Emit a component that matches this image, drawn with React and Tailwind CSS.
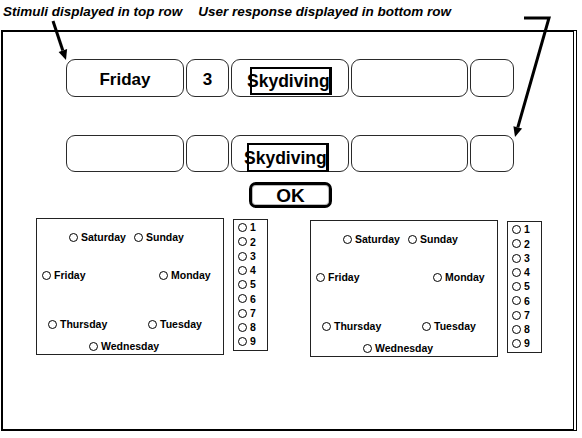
import React from 'react';

const days = [
    { row: 'pt-[12px] pl-[32px]', first: 'Saturday', firstW: 'w-[65px]', second: 'Sunday' },
    { row: 'pt-[26px] pl-[5px]', first: 'Friday', firstW: 'w-[117px]', second: 'Monday' },
    { row: 'pt-[37px] pl-[11px]', first: 'Thursday', firstW: 'w-[100px]', second: 'Tuesday' },
    { row: 'pt-[10px] pl-[52px]', first: 'Wednesday', firstW: '', second: null },
];

const Radio = ({ label, className = '' }) => (
    <div className={`flex items-center gap-[3px] ${className}`}>
        <span className="w-[9px] h-[9px] rounded-full border-[1.5px] border-black shrink-0" />
        <span className="text-[10.5px] font-bold leading-none text-black">{label}</span>
    </div>
);

// One rounded slot of the stimulus / response rows
const Slot = ({ w, children, className = '' }) => (
    <div className={`${w} h-full rounded-[9px] border-[1.5px] border-[#2a2a2a] ${className}`}>{children}</div>
);

const DayPanel = ({ className = '' }) => (
    <div className={`flex gap-[9px] items-start ${className}`}>
        <div className="w-[188px] h-[137px] border-[1.5px] border-[#222] flex flex-col">
            {days.map((d) => (
                <div key={d.first} className={`flex items-center h-[12px] box-content ${d.row}`}>
                    <Radio label={d.first} className={d.firstW} />
                    {d.second && <Radio label={d.second} />}
                </div>
            ))}
        </div>
        <div className="mt-[1px] w-[35px] h-[132px] border-[1.5px] border-[#222] flex flex-col pl-[4px] pt-[0.5px]">
            {[1, 2, 3, 4, 5, 6, 7, 8, 9].map((n) => (
                <div key={n} className="h-[14.25px] flex items-center">
                    <Radio label={n} />
                </div>
            ))}
        </div>
    </div>
);

const Skydiving = ({ box }) => (
    <div className={`w-[82px] h-[28px] border-2 border-r-[3px] border-black flex items-center ${box}`}>
        <span className="-ml-[5px] pt-[2px] text-[17.5px] font-bold leading-none text-black">Skydiving</span>
    </div>
);

export default function App() {
    return (
        <div className="relative w-[582px] h-[438px] bg-white overflow-hidden font-['Liberation_Sans',Arial,sans-serif] text-black">
            <div className="h-[30px] flex items-start pt-[5px] pl-[3px] text-[13.5px] font-bold italic leading-none">
                <span>Stimuli displayed in top row</span>
                <span className="ml-[16px]">User response displayed in bottom row</span>
            </div>

            <div className="ml-[1px] w-[576px] h-[401px] border-2 border-r-4 border-black [border-right-style:double] flex flex-col">
                {/* stimulus row */}
                <div className="mt-[27px] ml-[63px] h-[38px] flex gap-[2px]">
                    <Slot w="w-[118px]" className="flex items-center justify-center pt-[3px] text-[17px] font-bold">Friday</Slot>
                    <Slot w="w-[43px]" className="flex items-center justify-center pt-[3px] text-[17px] font-bold">3</Slot>
                    <Slot w="w-[118px]" className="pl-[18px] pt-[7px]">
                        <Skydiving />
                    </Slot>
                    <Slot w="w-[117px]" />
                    <Slot w="w-[44px]" />
                </div>

                {/* response row */}
                <div className="mt-[38px] ml-[63px] h-[37px] flex gap-[2px]">
                    <Slot w="w-[118px]" />
                    <Slot w="w-[43px]" />
                    <Slot w="w-[118px]" className="pl-[15px] pt-[7px]">
                        <Skydiving box="h-[29px]" />
                    </Slot>
                    <Slot w="w-[117px]" />
                    <Slot w="w-[44px]" />
                </div>

                <div className="mt-[10px] ml-[246px]">
                    <button className="w-[83px] h-[26px] rounded-[7px] border-[3px] border-black shadow-[inset_0_0_0_1px_#bbb] flex items-center justify-center text-[19px] font-bold leading-none">
                        OK
                    </button>
                </div>

                <div className="mt-[10px] ml-[33px] flex items-start">
                    <DayPanel />
                    <DayPanel className="ml-[42px] mt-[2px]" />
                </div>
            </div>

            {/* pointer arrows drawn over the caption and frame */}
            <svg className="absolute inset-0 pointer-events-none" width="582" height="438" viewBox="0 0 582 438">
                <line x1="53" y1="21" x2="62.8" y2="50.5" stroke="#000" strokeWidth="3" />
                <polygon points="66,60 67.1,49.1 58.6,51.9" fill="#000" />
                <polyline points="524,18 549,18 517.8,127.4" fill="none" stroke="#000" strokeWidth="3" />
                <polygon points="515,137 522.1,128.6 513.4,126.2" fill="#000" />
            </svg>
        </div>
    );
}
